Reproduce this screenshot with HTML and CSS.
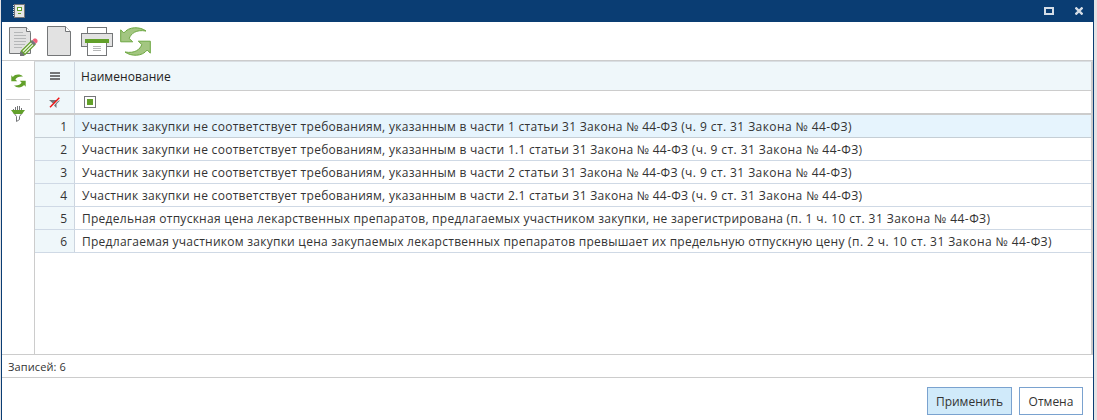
FILE: index.html
```html
<!DOCTYPE html>
<html lang="ru">
<head>
<meta charset="utf-8">
<title>Справочник</title>
<link rel="stylesheet" href="styles.css">
</head>
<body>
<div class="window">
  <header class="titlebar">
    <svg class="book" width="14" height="14" viewBox="0 0 14 14" shape-rendering="crispEdges">
      <path fill="#e6e6e6" d="M2 0h11v14H2z"/><path fill="none" stroke="#747678" d="M2.500.5h10v13h-10z"/>
      <path stroke="#d7dce0" stroke-dasharray="1 1" d="M1 1v12"/>
      <path fill="#fff" stroke="#62a02a" d="M5.500 3.500h4v3h-4z"/><path stroke="#62a02a" d="M6 9.500h3"/>
    </svg>
    <div class="controls">
      <svg width="10" height="8" viewBox="0 0 10 8" shape-rendering="crispEdges"><path fill="none" stroke="#d5dde6" stroke-width="2" d="M1 1h8v6H1z"/></svg>
      <svg width="8" height="8" viewBox="0 0 8 8"><path stroke="#d5dde6" stroke-width="2.300" d="M.5.5l7 7M7.500.5l-7 7"/></svg>
    </div>
  </header>
  <nav class="toolbar">
    <svg width="29" height="32" viewBox="0 0 29 32">
      <path fill="#e2e2e2" stroke="#747678" d="M.5 1.500h17l4 5v21H.5z"/><path fill="#fff" stroke="#747678" d="M17.500 1.500v4h4"/>
      <path stroke="#b5b7b8" d="M5 6.500h9M5 9.500h12M5 12.500h12M5 15.500h12M5 18.500h11M5 21.500h8"/>
      <path fill="#747678" d="M11 30v-4l1.500-1.500L16.500 28 15 30z"/><path fill="#eef6e5" stroke="#62a02a" stroke-width="1.200" d="M12.500 25L22.500 15l3.500 3.500L16 28.500zM14.200 26.800l10-10"/>
      <path fill="#747678" d="M21.500 16l2-2 3.500 3.500-2 2z"/><path fill="#ef5f76" d="M23.500 14l1.500-1.500h2l1.500 1.500v2L27 17.500z"/>
    </svg>
    <svg width="24" height="30" viewBox="0 0 24 30"><path fill="#e2e2e2" stroke="#747678" d="M.5.5h18l5 5v24H.5z"/><path fill="#fff" stroke="#747678" d="M18.500.5v5h5"/></svg>
    <svg width="32" height="29" viewBox="0 0 32 29" shape-rendering="crispEdges">
      <path fill="#fff" stroke="#747678" d="M6.500.5h19v7h-19z"/><path fill="#e2e2e2" stroke="#747678" d="M.5 6.500h31v13H.5z"/>
      <path fill="#fff" stroke="#747678" d="M6.500 15.500h19v13h-19z"/><path fill="#62a02a" d="M4 12h24v4H4z"/><path stroke="#b5b7b8" d="M12 19.500h8M12 21.500h8M12 23.500h8"/>
    </svg>
    <svg width="31" height="29" viewBox="0 0 31 29">
      <g fill="#a3c681" stroke="#6ca740"><path d="M.7 2.800v12h12L9.200 11.500C11 6.500 16 2.300 26 4C20-.5 9-.8 3.800 6z"/><path d="M30.300 26.200v-12h-12l3.500 3.300C20 22.500 15 26.700 5 25C11 29.500 22 29.800 27.200 23z"/></g>
    </svg>
  </nav>
  <main class="body">
    <aside class="side">
      <svg width="15" height="14" viewBox="0 0 15 14"><g fill="#62a02a"><path d="M.3 1.300v6h6L4.400 5.500C5.500 3.500 8 2.200 12 2.500C9-.2 4.500-.1 1.900 2.900z"/><path d="M14.700 12.700v-6h-6l1.900 1.800C9.500 10.500 7 11.800 3 11.500C6 14.200 10.500 14.100 13.100 11.100z"/></g></svg>
      <hr class="rule">
      <svg width="14" height="16" viewBox="0 0 14 16"><path stroke="#747678" d="M4.500 1v3M6.500 0v4M8.500 0v4M10.500 2v2M2.500 3v1"/><path fill="#fff" stroke="#747678" d="M2.500 6.500l3 4v5l3-2v-3l3-4z"/><path fill="#62a02a" d="M0 4h14l-3 4H3z"/></svg>
    </aside>
    <section class="grid">
      <div class="row head"><div class="num"><svg width="10" height="8" viewBox="0 0 10 8" shape-rendering="crispEdges"><path fill="#747678" d="M0 0h10v2H0zM0 3h10v2H0zM0 6h10v2H0z"/></svg></div><div class="cell">Наименование</div></div>
      <div class="row filter"><div class="num"><svg width="12" height="11" viewBox="0 0 12 11"><path fill="#747678" d="M0 3h8L4 6.500zM8 5l2.500-2v1L7.500 7v4L5 8.500z"/><path stroke="#ee1111" stroke-width="1.400" d="M1 10.300L10.300.7"/></svg></div><div class="cell"><span class="check"></span></div></div>
      <div class="row data selected"><div class="num">1</div><div class="cell"><span>Участник закупки не соответствует требованиям, указанным в части 1 статьи 31 Закона № 44-ФЗ <span class="law">(ч. 9 ст. 31 Закона № 44-ФЗ)</span></span></div></div>
      <div class="row data"><div class="num">2</div><div class="cell"><span>Участник закупки не соответствует требованиям, указанным в части 1.1 статьи 31 Закона № 44-ФЗ <span class="law">(ч. 9 ст. 31 Закона № 44-ФЗ)</span></span></div></div>
      <div class="row data"><div class="num">3</div><div class="cell"><span>Участник закупки не соответствует требованиям, указанным в части 2 статьи 31 Закона № 44-ФЗ <span class="law">(ч. 9 ст. 31 Закона № 44-ФЗ)</span></span></div></div>
      <div class="row data"><div class="num">4</div><div class="cell"><span>Участник закупки не соответствует требованиям, указанным в части 2.1 статьи 31 Закона № 44-ФЗ <span class="law">(ч. 9 ст. 31 Закона № 44-ФЗ)</span></span></div></div>
      <div class="row data drugs"><div class="num">5</div><div class="cell"><span>Предельная отпускная цена лекарственных препаратов, предлагаемых участником закупки, не зарегистрирована <span class="law">(п. 1 ч. 10 ст. 31 Закона № 44-ФЗ)</span></span></div></div>
      <div class="row data drugs"><div class="num">6</div><div class="cell"><span>Предлагаемая участником закупки цена закупаемых лекарственных препаратов превышает их предельную отпускную цену <span class="law">(п. 2 ч. 10 ст. 31 Закона № 44-ФЗ)</span></span></div></div>
    </section>
  </main>
  <div class="status">Записей: 6</div>
  <footer class="actions"><button class="btn primary">Применить</button><button class="btn cancel">Отмена</button></footer>
</div>
</body>
</html>
```
FILE: styles.css
```css
* { box-sizing: border-box; }
body { margin: 0; height: 420px; overflow: hidden; padding: 0 3px 0 1px; background: #e4e3e5; font: 12px "Open Sans", "Noto Sans", sans-serif; color: #333; }
svg { display: block; flex: none; }
.window { height: 420px; display: flex; flex-direction: column; background: #fff; border: solid #0a3d73; border-width: 0 1px; }
.titlebar { height: 22px; flex: none; background: #0a3d73; display: flex; justify-content: space-between; padding: 4px 10px 0 10px; }
.controls { display: flex; gap: 21px; padding-top: 3px; }
.toolbar { height: 39px; flex: none; display: flex; align-items: flex-start; gap: 7px; padding: 4px 7px 0; border-bottom: 1px solid #ccc; }
.toolbar svg:nth-child(2) { margin-left: 2px; }
.toolbar svg:nth-child(3) { margin-left: 3px; }
.toolbar svg:nth-child(n+3) { margin-top: 1px; }
.body { height: 293px; flex: none; display: flex; }
.side { width: 32px; padding: 13px 4px 0; display: flex; flex-direction: column; align-items: center; }
.rule { width: 24px; height: 1px; border: 0; background: #ccc; margin: 11px 0 6px; }
.grid { flex: 1; border-left: 1px solid #ccc; border-right: 2px solid #ccc; border-top: 1px solid #d9dee2; }
.row { display: grid; grid-template-columns: 40px 1fr; height: 23px; border-bottom: 1px solid #cfd9e5; white-space: nowrap; }
.num { background: #eff7fa; border-right: 1px solid #ccd5df; display: flex; align-items: center; justify-content: center; }
.cell { display: flex; align-items: center; padding-left: 7px; }
.head { height: 29px; background: #eff7fa; border-bottom-color: #ccc; color: #222; }
.head .cell { padding-left: 6px; letter-spacing: .07px; }
.filter { height: 24px; border-bottom: 2px solid #ccc; }
.filter .cell { padding-left: 9px; }
.check { width: 12px; height: 12px; border: 1px solid #747678; padding: 2px; background: #62a02a content-box; }
.data .num { justify-content: flex-end; padding-right: 7px; }
.data .cell { letter-spacing: .29px; }
.drugs .cell { letter-spacing: .26px; }
.data .law { letter-spacing: .42px; }
.selected { background: #e6f4fd; border-bottom-color: #c5ced5; }
.status { height: 24px; flex: none; border: solid #ccc; border-width: 1px 0; font-size: 11px; line-height: 23px; padding-left: 6px; letter-spacing: .12px; }
.actions { display: flex; justify-content: flex-end; gap: 7px; padding: 9px 10px 0 0; }
.btn { height: 28px; padding: 0; border: 1px solid #7aa2cf; background: #fff; color: #333; font: inherit; }
.primary { width: 85px; background: #d0eafa; }
.cancel { width: 64px; }
```
